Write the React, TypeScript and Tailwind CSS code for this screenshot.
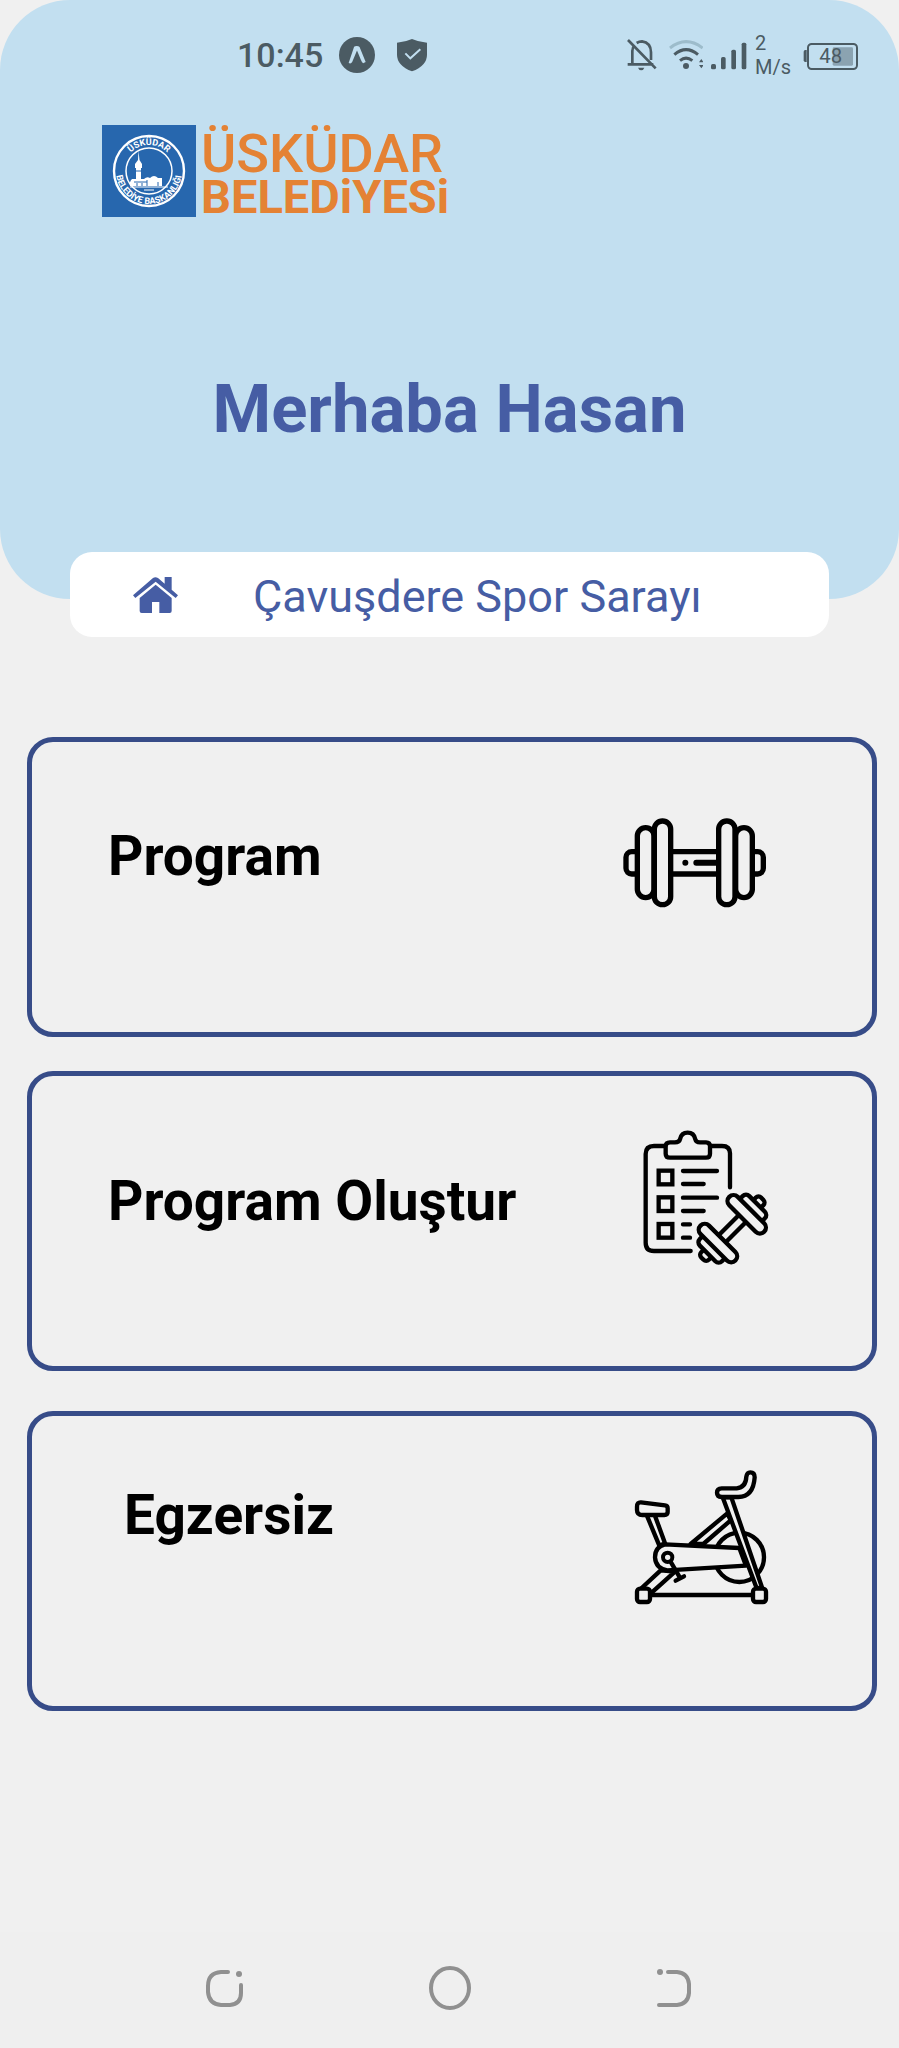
import type { ReactNode } from "react";

function StatusBar() {
  return (
    <div className="flex h-[109px] items-center justify-between pr-[41px] pl-[237px] text-[#4b5b63]">
      <div className="flex items-center">
        <time className="text-[34px] leading-10 font-medium">10:45</time>
        <svg className="ml-4 size-9" viewBox="357 48 112 112" aria-hidden="true">
          <circle cx="413" cy="104" r="56" fill="currentColor" />
          <path d="M387 129L404 78Q406 76 412 76Q418 76 421 79L440 126L432 130Q428 127 425 119L413 90L398 126Q394 133 387 129Z" fill="#c2dff0" />
        </svg>
        <svg className="ml-5 h-9 w-[34px]" viewBox="528 50 102 108" aria-hidden="true">
          <path d="M579 56Q598 65 624 67V103Q624 136 579 153Q534 136 534 103V67Q560 65 579 56Z" fill="currentColor" />
          <path d="M559 99L574 114L604 87" fill="none" stroke="#c2dff0" strokeWidth="6" />
        </svg>
      </div>
      <div className="flex items-center gap-2">
        <svg className="h-9 w-[34px]" viewBox="51 50 102 108" fill="none" stroke="currentColor" strokeWidth="8" aria-hidden="true">
          <path d="M53 132H130M67 132V92Q67 81 73 76M80 68Q88 63 96 63Q123 67 123 96V119M54 59L137 144" />
          <path d="M84 142H103Q100 150 94 150Q87 150 84 142Z" fill="currentColor" stroke="none" />
        </svg>
        <svg className="h-9 w-[34px]" viewBox="178 50 102 108" fill="none" stroke="currentColor" strokeWidth="9" aria-hidden="true">
          <path d="M181 83Q229 45 279 83" stroke="#9dbccb" />
          <path d="M194 103Q229 73 265 103M211 121Q229 106 248 121" />
          <circle cx="229" cy="137" r="9" fill="currentColor" stroke="none" />
          <path d="M268 126L275 116L282 126ZM268 134H282L275 144Z" fill="currentColor" stroke="none" />
        </svg>
        <svg className="h-9 w-9" viewBox="303 50 108 108" fill="currentColor" aria-hidden="true">
          <rect x="303" y="131" width="15" height="16" rx="5" />
          <rect x="333" y="110" width="14" height="37" rx="5" />
          <rect x="364" y="88" width="14" height="59" rx="5" />
          <rect x="395" y="67" width="14" height="80" rx="5" />
        </svg>
        <div className="w-[35px] text-xl leading-6">
          <div>2</div>
          <div>M/s</div>
        </div>
        <svg className="ml-1 h-9 w-14" viewBox="576 50 168 108" role="img" aria-label="48%">
          <path d="M590 89H586Q581 89 581 94V120Q581 125 586 125H590Z" fill="currentColor" />
          <rect x="594" y="71" width="147" height="75" rx="11" fill="none" stroke="currentColor" strokeWidth="6" />
          <rect x="668" y="81" width="61" height="55" rx="4" fill="#8ba3b1" />
          <text x="628" y="129" fontFamily="Roboto, sans-serif" fontSize="61" fontWeight="400" fill="currentColor">48</text>
        </svg>
      </div>
    </div>
  );
}

function Logo() {
  return (
    <svg className="h-[108px] w-[360px]" viewBox="90 115 360 108" role="img" aria-label="Üsküdar Belediyesi">
      <defs>
        <path id="arc-top" d="M123 171A26 26 0 0 1 175 171" />
        <path id="arc-bottom" d="M116.550 165A33 33 0 1 0 181.450 165" />
      </defs>
      <rect x="102" y="125" width="94" height="92" fill="#2767ae" />
      <g fill="none" stroke="#fff">
        <circle cx="149" cy="171" r="35" strokeWidth="2.4" />
        <circle cx="149" cy="171" r="23" strokeWidth="1.5" />
      </g>
      <g fill="#fff" fontFamily="Roboto, sans-serif" fontWeight="700">
        <text fontSize="9" textAnchor="middle">
          <textPath href="#arc-top" startOffset="50%">ÜSKÜDAR</textPath>
        </text>
        <text fontSize="9" textAnchor="middle">
          <textPath href="#arc-bottom" startOffset="50%">BELEDİYE BAŞKANLIĞI</textPath>
        </text>
        <path d="M138.500 151L139.500 160L142 164V168H141V179H144Q147 176 150 178Q154 174 158 178L162 178V186H130Q129 182 132 179H136V168H135V164L138 160Z" />
      </g>
      <path d="M134 182H147M137 187V183M142 187V183M147 187V180M158 186V182M135 171H142" stroke="#2767ae" strokeWidth="1" />
      <path d="M130 187H168M144 190H154" stroke="#fff" strokeWidth="1" />
      <g fill="#e48234" fontFamily="Roboto, sans-serif">
        <text x="201" y="172" fontSize="54" fontWeight="500">ÜSKÜDAR</text>
        <text x="201" y="213" fontSize="47" fontWeight="700">BELEDiYESi</text>
      </g>
    </svg>
  );
}

function HomeIcon() {
  return (
    <svg className="h-9 w-[45px]" viewBox="399 711 135 108" fill="currentColor" aria-hidden="true">
      <path d="M399 766L459 714Q466 709 474 714L494 731V711H515V749L534 766L527 774L467 725L406 774Z" />
      <path d="M467 734L515 774V813Q515 819 509 819H478V786H456V819H425Q419 819 419 813V774Z" />
    </svg>
  );
}

function DumbbellIcon() {
  return (
    <svg className="size-[150px] shrink-0" viewBox="66 3 450 450" fill="#f0f0f0" stroke="#000" strokeWidth="16" strokeLinecap="round" aria-hidden="true">
      <rect x="78" y="185" width="60" height="67" rx="17" />
      <rect x="430" y="185" width="60" height="67" rx="17" />
      <rect x="112" y="113" width="50" height="210" rx="25" />
      <rect x="407" y="113" width="50" height="210" rx="25" />
      <path d="M212 185H356M212 252H356" />
      <path d="M289 218H352" strokeWidth="18" />
      <circle cx="256" cy="218" r="9" fill="#000" stroke="none" />
      <rect x="163" y="93" width="49" height="251" rx="24" />
      <rect x="356" y="93" width="49" height="251" rx="24" />
    </svg>
  );
}

function ClipboardIcon() {
  return (
    <svg className="size-[150px] shrink-0" viewBox="6 45 450 450" fill="none" stroke="#000" strokeWidth="13" strokeLinecap="round" aria-hidden="true">
      <path d="M330 232V130Q330 108 306 108H272M136 108H102Q77 108 77 132V398Q77 423 102 423H212" />
      <path d="M150 97H165Q178 97 180 88Q184 68 203 68Q222 68 226 88Q228 97 240 97H258Q270 97 270 109V131Q270 143 258 143H150Q137 143 137 131V109Q137 97 150 97Z" />
      <rect x="116" y="182" width="41" height="41" />
      <rect x="116" y="262" width="41" height="41" />
      <rect x="116" y="342" width="41" height="41" />
      <path d="M189 183H291M189 222H251M189 263H291M189 303H251M189 343H210M189 383H210" />
      <g transform="translate(337 356) rotate(-45)" fill="#f0f0f0">
        <rect x="92" y="-16" width="35" height="32" rx="11" />
        <rect x="-127" y="-16" width="35" height="32" rx="11" />
        <rect x="70" y="-47" width="35" height="94" rx="14" />
        <rect x="-105" y="-47" width="35" height="94" rx="14" />
        <path d="M-43 -15H43M-43 15H43" />
        <rect x="43" y="-74" width="36" height="148" rx="18" />
        <rect x="-79" y="-74" width="36" height="148" rx="18" />
      </g>
    </svg>
  );
}

function BikeIcon() {
  return (
    <svg className="size-[150px] shrink-0" viewBox="36 45 450 450" fill="#f0f0f0" stroke="#000" strokeWidth="13" strokeLinecap="round" strokeLinejoin="round" aria-hidden="true">
      <circle cx="388" cy="322" r="74" />
      <path d="M352 190L242 282H280L362 211Z" />
      <path d="M112 200L148 287L165 280L136 200" />
      <path d="M152 361L95 414L125 428L195 365Z" />
      <path d="M388 294L165 283Q135 290 135 322Q137 355 172 361L408 347Z" />
      <path d="M338 142L440 415L456 412L364 142Z" />
      <path d="M183 337L208 380M197 392L222 379" />
      <circle cx="173" cy="322" r="14" strokeWidth="12" />
      <path d="M93 157L165 166Q173 167 173 175V186Q173 195 163 195H97Q81 195 81 180V170Q81 156 93 157Z" />
      <path d="M335 115H380Q408 112 409 80Q411 67 421 67Q434 67 434 82Q430 140 385 141H335Q321 140 321 128Q321 115 335 115Z" />
      <path d="M124 435H425" />
      <rect x="81" y="416" width="39" height="40" rx="9" />
      <rect x="429" y="416" width="39" height="40" rx="9" />
    </svg>
  );
}

type MenuItem = { title: string; icon: ReactNode; titleClass: string; cardClass: string };

const items: MenuItem[] = [
  { title: "Program", icon: <DumbbellIcon />, titleClass: "mt-[33px]", cardClass: "" },
  { title: "Program Oluştur", icon: <ClipboardIcon />, titleClass: "mt-[44px]", cardClass: "mt-[34px]" },
  { title: "Egzersiz", icon: <BikeIcon />, titleClass: "mt-[18px] ml-4", cardClass: "mt-10" },
];

function NavBar() {
  return (
    <nav className="mt-auto grid grid-cols-[1fr_auto_1fr] items-center bg-[#efefef] px-[199px] pt-[30px] pb-[34px]">
      <button type="button" aria-label="Son uygulamalar" className="justify-self-start">
        <svg className="size-[52px]" viewBox="0 0 52 52" fill="none" stroke="#909090" strokeWidth="4" strokeLinecap="round">
          <path d="M29 10H22Q9 11 9 24V30Q10 42 22 43H31Q42 42 42 31V23" />
          <circle cx="40" cy="12" r="3" fill="#909090" stroke="none" />
        </svg>
      </button>
      <button type="button" aria-label="Ana ekran">
        <svg className="size-[52px]" viewBox="0 0 52 52" fill="none" stroke="#909090" strokeWidth="4">
          <ellipse cx="26" cy="26" rx="19" ry="20" />
        </svg>
      </button>
      <button type="button" aria-label="Geri" className="justify-self-end">
        <svg className="size-[52px]" viewBox="0 0 52 52" fill="none" stroke="#909090" strokeWidth="4" strokeLinecap="round">
          <path d="M20 10H29Q40 11 41 22V31Q40 42 29 43H11" />
          <circle cx="12" cy="10" r="3" fill="#909090" stroke="none" />
        </svg>
      </button>
    </nav>
  );
}

export default function App() {
  return (
    <div className="flex min-h-screen flex-col bg-[#f0f0f0] font-[Roboto,sans-serif]">
      <header className="rounded-[70px] bg-[#c2dff0] pb-[150px]">
        <StatusBar />
        <div className="mt-[6px] flex pl-[90px]">
          <Logo />
        </div>
        <h1 className="mt-[146px] text-center text-[67px] leading-[80px] font-bold text-[#465da4]">Merhaba Hasan</h1>
      </header>
      <div className="relative mx-[70px] -mt-[47px] flex h-[85px] items-center rounded-[22px] bg-white pl-[63px] text-[#465da4]">
        <HomeIcon />
        <p className="ml-[75px] pt-1 text-[45px] leading-[52px]">Çavuşdere Spor Sarayı</p>
      </div>
      <main className="mt-[100px] mr-[22px] ml-[27px] flex flex-col">
        {items.map((item) => (
          <button
            key={item.title}
            type="button"
            className={`flex min-h-[300px] items-start justify-between rounded-[26px] border-5 border-[#374c88] pt-[49px] pr-[100px] pl-[76px] text-left ${item.cardClass}`}
          >
            <span className={`text-[55px] leading-[64px] font-bold text-black ${item.titleClass}`}>{item.title}</span>
            {item.icon}
          </button>
        ))}
      </main>
      <NavBar />
    </div>
  );
}
